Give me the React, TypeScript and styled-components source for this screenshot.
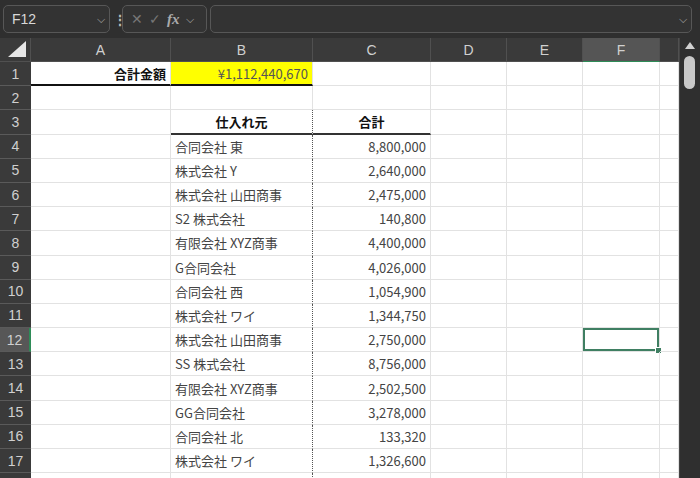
import React from "react";
import styled, { createGlobalStyle, css } from "styled-components";

const Global = createGlobalStyle`
  html, body { margin: 0; padding: 0; background: #2f2f2f; overflow: hidden; }
  body { font-family: "Noto Sans CJK JP", "Noto Sans", sans-serif; }
`;

const COLS = "31px 140px 142px 118px 76px 76px 77px 19px";

const Page = styled.div`
  width: 700px; height: 478px; display: flex; flex-direction: column; overflow: hidden;
`;
const Toolbar = styled.div`
  height: 38px; background: #2f2f2f; display: flex; align-items: center; gap: 3px; padding: 0 8px 0 3px; box-sizing: border-box; flex-shrink: 0;
`;
const Box = styled.div<{ w?: number; grow?: boolean }>`
  height: 28px; ${p => p.w && `width:${p.w}px;`} ${p => p.grow && "flex:1;"}
  border: 1px solid #575757; border-radius: 5px; background: #333;
  display: flex; align-items: center; box-sizing: border-box; padding: 0 4px 0 8px; color: #d8d8d8; font-size: 14px;
  font-family: "Liberation Sans", sans-serif; gap: 6px;
`;
const Dots = styled.span` color: #bbb; font-size: 14px; font-weight: bold; width: 6px; text-align:center;`;
const Fx = styled.span` font-family: "Liberation Serif", serif; font-style: italic; font-weight: bold; color:#aaa; font-size: 15px;`;
const Body = styled.div` flex: 1; display: flex; overflow: hidden; `;
const Sheet = styled.div` width: 679px; display: flex; flex-direction: column; background: #fff;`;
const Scroll = styled.div` width: 21px; background: #2f2f2f; position: relative; border-left: 1px solid #444; box-sizing: border-box;`;
const Thumb = styled.div` position: absolute; left: 4px; top: 18px; width: 11px; height: 33px; border-radius: 6px; background: #c8c8c8; `;
const Arrow = styled.div` position:absolute; left:5px; top:4px; width:0; height:0; border-left:5px solid transparent; border-right:5px solid transparent; border-bottom:7px solid #d0d0d0;`;
const Row = styled.div<{ h: number }>` display: grid; grid-template-columns: ${COLS}; height: ${p => p.h}px; flex-shrink: 0;`;
const HeadCell = styled.div<{ active?: boolean }>`
  background: ${p => (p.active ? "#555" : "#3a3a3a")}; color: #d0d0d0; font-family: "Liberation Sans", sans-serif; font-size: 14px;
  display: flex; align-items: center; justify-content: center; border-right: 1px solid #505050; box-sizing: border-box;
  border-bottom: 1px solid ${p => (p.active ? "#2e8b57" : "#505050")};
`;
const Corner = styled.div` background:#3a3a3a; position: relative; border-right:1px solid #505050; border-bottom:1px solid #505050;
  &::after { content:""; position:absolute; right:4px; bottom:4px; border-left:18px solid transparent; border-bottom:16px solid #e6e6e6; }`;
const RowHead = styled.div<{ active?: boolean }>`
  background: ${p => (p.active ? "#575757" : "#3a3a3a")}; color: #d0d0d0; font-family: "Liberation Sans", sans-serif; font-size: 14px;
  display: flex; align-items: center; justify-content: center; border-bottom: 1px solid #5a5a5a; box-sizing: border-box;
  ${p => p.active && "border-right: 2px solid #2e8b57;"}
`;
const Cell = styled.div<{ align?: string; bold?: boolean; yellow?: boolean; bb?: boolean; thickB?: boolean; dotR?: boolean; sel?: boolean }>`
  position: relative; box-sizing: border-box; font-size: 13px; color: #444; padding: 0 4px; white-space: nowrap; overflow: visible;
  display: flex; align-items: center; justify-content: ${p => p.align === "right" ? "flex-end" : p.align === "center" ? "center" : "flex-start"};
  border-right: 1px solid #e2e2e2; border-bottom: 1px solid #e2e2e2;
  ${p => p.bold && "font-weight: bold; color:#111;"}
  ${p => p.yellow && "background: #ffff00; color:#555;"}
  ${p => p.bb && "border-bottom: 2px solid #111;"}
  ${p => p.thickB && "border-bottom: 2px solid #333;"}
  ${p => p.dotR && "border-right: 1px dotted #555;"}
  ${p => p.sel && css`box-shadow: inset 0 0 0 2px #3f7f62;`}
`;
const Handle = styled.div` position:absolute; right:-3px; bottom:-3px; width:5px; height:5px; background:#3f7f62; border:1px solid #fff;`;

const data: [string, string][] = [
  ["合同会社 東", "8,800,000"], ["株式会社 Y", "2,640,000"], ["株式会社 山田商事", "2,475,000"], ["S2 株式会社", "140,800"],
  ["有限会社 XYZ商事", "4,400,000"], ["G合同会社", "4,026,000"], ["合同会社 西", "1,054,900"], ["株式会社 ワイ", "1,344,750"],
  ["株式会社 山田商事", "2,750,000"], ["SS 株式会社", "8,756,000"], ["有限会社 XYZ商事", "2,502,500"], ["GG合同会社", "3,278,000"],
  ["合同会社 北", "133,320"], ["株式会社 ワイ", "1,326,600"], ["株式会社 山田商事", ""],
];

const RH = 24.2;
const Empty = ({ n }: { n: number }) => <>{Array.from({ length: n }).map((_, i) => <Cell key={i} />)}</>;

export default function App() {
  return (
    <Page>
      <Global />
      <Toolbar>
        <Box w={107} style={{ justifyContent: "space-between" }}><span>F12</span><span style={{ fontSize: 11, color: "#aaa" }}>⌵</span></Box>
        <Dots>⋮</Dots>
        <Box w={85} style={{ color: "#777", gap: 6 }}><span>✕</span><span>✓</span><Fx>fx</Fx><span style={{ fontSize: 11, color: "#aaa" }}>⌵</span></Box>
        <Box grow style={{ justifyContent: "flex-end" }}><span style={{ fontSize: 11, color: "#aaa" }}>⌵</span></Box>
      </Toolbar>
      <Body>
        <Sheet>
          <Row h={24}>
            <Corner />
            {["A", "B", "C", "D", "E", "F"].map(c => <HeadCell key={c} active={c === "F"}>{c}</HeadCell>)}
            <HeadCell />
          </Row>
          <Row h={RH}>
            <RowHead>1</RowHead>
            <Cell align="right" bold bb>合計金額</Cell>
            <Cell align="right" yellow bb>¥1,112,440,670</Cell>
            <Empty n={5} />
          </Row>
          <Row h={RH}><RowHead>2</RowHead><Empty n={7} /></Row>
          <Row h={RH}>
            <RowHead>3</RowHead><Cell />
            <Cell align="center" bold thickB dotR>仕入れ元</Cell>
            <Cell align="center" bold thickB>合計</Cell>
            <Empty n={4} />
          </Row>
          {data.map(([n, v], i) => {
            const r = i + 4;
            return (
              <Row h={RH} key={r}>
                <RowHead active={r === 12}>{r}</RowHead>
                <Cell />
                <Cell dotR>{n}</Cell>
                <Cell align="right">{v}</Cell>
                <Cell /><Cell />
                <Cell sel={r === 12}>{r === 12 && <Handle />}</Cell>
                <Cell />
              </Row>
            );
          })}
        </Sheet>
        <Scroll><Arrow /><Thumb /></Scroll>
      </Body>
    </Page>
  );
}
